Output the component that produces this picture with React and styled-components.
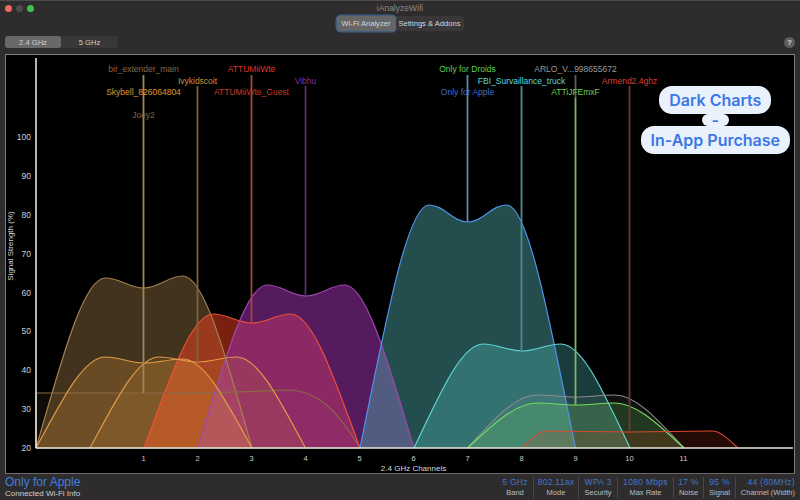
import React from "react";
import styled, { createGlobalStyle } from "styled-components";

const GlobalStyle = createGlobalStyle`
  html, body {
    margin: 0;
    padding: 0;
    background: #2f2c2e;
  }
  body {
    font-family: "Liberation Sans", Arial, sans-serif;
  }
`;

const Window = styled.div`
  display: flex;
  flex-direction: column;
  width: 800px;
  height: 500px;
  overflow: hidden;
  background: #2f2c2e;
  color: #d8d8d8;
  box-sizing: border-box;
  border-top: 1px solid #4c4a4b;
`;
const TitleBar = styled.div`
  position: relative;
  display: flex;
  align-items: center;
  justify-content: center;
  height: 14px;
  font-size: 8.5px;
  color: #8c8a8b;
`;
const Lights = styled.div`
  position: absolute;
  left: 5px;
  top: 4px;
  display: flex;
  gap: 4px;
`;
const Light = styled.span`
  width: 7px;
  height: 7px;
  border-radius: 50%;
  background: ${(p) => p.$color};
`;
const TabRow = styled.div`
  display: flex;
  justify-content: center;
  margin-top: 1px;
  height: 15px;
`;
const Tab = styled.div`
  display: flex;
  align-items: center;
  justify-content: center;
  box-sizing: border-box;
  width: ${(p) => p.$w}px;
  font-size: 7.6px;
  color: #d6d6d6;
  border-radius: 4px;
  background: ${(p) => (p.$active ? "#666669" : "#3a3739")};
  box-shadow: ${(p) => (p.$active ? "0 0 0 1.5px #3f5f82" : "none")};
`;
const BandRow = styled.div`
  display: flex;
  align-items: center;
  justify-content: space-between;
  padding: 0 5px;
  margin-top: 5px;
  height: 12px;
`;
const Segments = styled.div`
  display: flex;
  width: 113px;
  height: 12px;
  border-radius: 3px;
  background: #3a3739;
`;
const Segment = styled.div`
  display: flex;
  align-items: center;
  justify-content: center;
  width: ${(p) => p.$w}px;
  font-size: 7.6px;
  color: #cfcfcf;
  border-radius: 3px;
  background: ${(p) => (p.$active ? "#69686a" : "transparent")};
`;
const Help = styled.div`
  display: flex;
  align-items: center;
  justify-content: center;
  width: 11px;
  height: 11px;
  border-radius: 50%;
  background: #5e5c5e;
  color: #d8d8d8;
  font-size: 8px;
  font-weight: 700;
`;
const ChartBox = styled.div`
  position: relative;
  box-sizing: border-box;
  margin: 6px 5px 0;
  height: 420px;
  background: #000;
  border: 1px solid #7d7d7d;
  border-bottom-color: #6a6a6a;
`;
const Chart = styled.svg`
  display: block;
  width: 788px;
  height: 418px;
`;
const Promo = styled.div`
  position: absolute;
  right: 4px;
  top: 31px;
  display: flex;
  flex-direction: column;
  align-items: center;
`;
const Pill = styled.div`
  padding: 0 ${(p) => p.$pad}px;
  height: ${(p) => p.$h}px;
  line-height: ${(p) => p.$h}px;
  border-radius: 13px;
  background: #e9f1fd;
  color: #3b78e2;
  font-family: "Inter", "Liberation Sans", sans-serif;
  font-size: 16px;
  font-weight: 600;
  white-space: nowrap;
`;
const Footer = styled.div`
  display: flex;
  justify-content: space-between;
  flex: 1;
  padding: 1px 5px 0;
`;
const Connected = styled.div`
  display: flex;
  flex-direction: column;
`;
const ConnectedName = styled.div`
  font-size: 12px;
  line-height: 14px;
  color: #3f7fdc;
`;
const ConnectedHint = styled.div`
  font-size: 8px;
  line-height: 10px;
  color: #cfcfcf;
`;
const Stats = styled.div`
  display: flex;
  height: 21px;
  margin-top: 2px;
`;
const Stat = styled.div`
  display: flex;
  flex-direction: column;
  align-items: ${(p) => (p.$last ? "flex-end" : "center")};
  justify-content: space-between;
  box-sizing: border-box;
  width: ${(p) => p.$w}px;
  border-left: ${(p) => (p.$first ? "none" : "1px solid #49474a")};
`;
const StatValue = styled.div`
  font-size: 8.5px;
  line-height: 11px;
  letter-spacing: 0.3px;
  color: #3f78d0;
  white-space: nowrap;
`;
const StatLabel = styled.div`
  font-size: 7.5px;
  line-height: 10px;
  color: #bdbdbd;
  white-space: nowrap;
`;

const BASE = 448;
const CH = (n) => 143.5 + (n - 1) * 54;
const valueY = (v) => BASE - (v - 20) * 3.885;

// left edge, right edge, then y of left peak, centre dip, right peak
const hump = (x0, x1, lp, dip, rp, spread = 0.18) => {
  const w = x1 - x0;
  const mx = x0 + w * 0.5;
  const lx = mx - w * spread;
  const rx = mx + w * spread;
  const rise = lx - x0;
  return [
    `M${x0},${BASE}`,
    `C${x0 + rise * 0.36},${BASE - (BASE - lp) * 0.5} ${x0 + rise * 0.68},${lp} ${lx},${lp}`,
    `C${lx + w * 0.07},${lp} ${mx - w * 0.07},${dip} ${mx},${dip}`,
    `C${mx + w * 0.07},${dip} ${rx - w * 0.07},${rp} ${rx},${rp}`,
    `C${x1 - rise * 0.68},${rp} ${x1 - rise * 0.36},${BASE - (BASE - rp) * 0.5} ${x1},${BASE}`,
  ].join(" ");
};

// painted back to front, the outlines go on top of all fills
const curves = [
  { d: hump(36, 252, 278, 288, 276), stroke: "#a5804e", fill: "rgba(165,128,78,0.4)" },
  {
    d: `M36,393 L140,393 C200,394 240,392 287,390 C320,390 340,415 360,${BASE} L36,${BASE} Z`,
    stroke: "#8a6a45",
    fill: "rgba(150,110,60,0.1)",
  },
  { d: hump(144, 360, 314, 323, 314), stroke: "#ee5038", fill: "rgba(244,64,32,0.5)" },
  { d: hump(198, 414, 285, 296, 285), stroke: "#9d48b0", fill: "rgba(154,50,172,0.55)" },
  { d: hump(36, 252, 357, 363, 359), stroke: "#e29a45", fill: "rgba(226,150,60,0.24)" },
  { d: hump(90, 305.5, 357, 362, 357), stroke: "#e29a45", fill: "rgba(226,150,60,0.14)" },
  { d: hump(360, 575.5, 205, 222, 205), stroke: "#4f93e8", fill: "rgba(78,170,170,0.46)" },
  { d: hump(414, 630, 344, 351, 344), stroke: "#5fd6d6", fill: "rgba(90,200,200,0.3)" },
  { d: hump(467.5, 684, 395, 397, 395), stroke: "#8c8c8c", fill: "rgba(140,140,140,0.12)" },
  { d: hump(467.5, 684, 403, 405, 403), stroke: "#74dc62", fill: "rgba(110,220,90,0.2)" },
  { d: hump(521.5, 738, 431, 432, 431, 0.38), stroke: "#d84a2e", fill: "rgba(200,60,30,0.18)" },
];

const drops = [
  { x: CH(1), y1: 75, y2: 393, stroke: "#a5855a" },
  { x: CH(2), y1: 86, y2: 362, stroke: "#80603f" },
  { x: CH(3), y1: 75, y2: 323, stroke: "#a84536" },
  { x: CH(4), y1: 86, y2: 296, stroke: "#5a3068" },
  { x: CH(7), y1: 75, y2: 222, stroke: "#5c8ca3" },
  { x: CH(8), y1: 86, y2: 351, stroke: "#4f8a90" },
  { x: CH(9), y1: 75, y2: 98, stroke: "#5f5f5f" },
  { x: CH(9), y1: 98, y2: 405, stroke: "#7cb468" },
  { x: CH(10), y1: 86, y2: 432, stroke: "#6c3d32" },
];

const names = [
  { t: "bir_extender_main", x: CH(1), y: 72, c: "#8a6b47" },
  { t: "Ivykidscoit", x: CH(2), y: 84, c: "#cf9040" },
  { t: "ATTUMiiWte", x: CH(3), y: 72, c: "#e03222" },
  { t: "Vibhu", x: CH(4), y: 84, c: "#8a2c9c" },
  { t: "Skybell_826064804", x: CH(1), y: 95, c: "#e09530" },
  { t: "ATTUMiiWte_Guest", x: CH(3), y: 95, c: "#c83a25" },
  { t: "Joey2", x: CH(1), y: 118, c: "#806646" },
  { t: "Only for Droids", x: CH(7), y: 72, c: "#5fd050" },
  { t: "ARLO_V...998655672", x: CH(9), y: 72, c: "#9a9a9a" },
  { t: "FBI_Survaillance_truck", x: CH(8), y: 84, c: "#5fd8d8" },
  { t: "Only for Apple", x: CH(7), y: 95, c: "#3f70d0" },
  { t: "ATTiJFEmxF", x: CH(9), y: 95, c: "#6fd050" },
  { t: "Armend2.4ghz", x: CH(10), y: 84, c: "#d84030" },
];

const stats = [
  ["5 GHz", "Band", 36],
  ["802.11ax", "Mode", 45],
  ["WPA 3", "Security", 39],
  ["1080 Mbps", "Max Rate", 56],
  ["17 %", "Noise", 30],
  ["95 %", "Signal", 32],
  ["44 (80MHz)", "Channel (Width)", 60],
];

const channels = [1, 2, 3, 4, 5, 6, 7, 8, 9, 10, 11];
const ticks = [20, 30, 40, 50, 60, 70, 80, 90, 100];

function App() {
  return (
    <Window>
      <GlobalStyle />
      <TitleBar>
        <Lights>
          <Light $color="#ec6a5e" />
          <Light $color="#4e4c4d" />
          <Light $color="#3fc24f" />
        </Lights>
        iAnalyzeWifi
      </TitleBar>
      <TabRow>
        <Tab $w={59} $active>Wi-Fi Analyzer</Tab>
        <Tab $w={68}>Settings &amp; Addons</Tab>
      </TabRow>
      <BandRow>
        <Segments>
          <Segment $w={56} $active>2.4 GHz</Segment>
          <Segment $w={57}>5 GHz</Segment>
        </Segments>
        <Help>?</Help>
      </BandRow>
      <ChartBox>
        <Chart viewBox="6 55 788 418">
          {curves.map((c, i) => (
            <path key={i} d={c.d} fill={c.fill} />
          ))}
          {curves.map((c, i) => (
            <path key={i} d={c.d} fill="none" stroke={c.stroke} strokeWidth="1.2" />
          ))}
          {drops.map((l, i) => (
            <line key={i} x1={l.x} x2={l.x} y1={l.y1} y2={l.y2} stroke={l.stroke} strokeWidth="1.8" />
          ))}
          <line x1="36" x2="36" y1="58" y2={BASE} stroke="#f2efe9" strokeWidth="1.5" />
          <line x1="36" x2="793" y1={BASE} y2={BASE} stroke="#e8e4da" strokeWidth="1.5" />
          {names.map((n) => (
            <text key={n.t} x={n.x} y={n.y} fill={n.c} fontSize="8.5" textAnchor="middle">
              {n.t}
            </text>
          ))}
          {ticks.map((v) => (
            <text key={v} x="31" y={valueY(v) + 3} fill="#d0d0d0" fontSize="8.5" textAnchor="end">
              {v}
            </text>
          ))}
          {channels.map((n) => (
            <text key={n} x={CH(n)} y="461" fill="#d0d0d0" fontSize="7.5" textAnchor="middle">
              {n}
            </text>
          ))}
          <text x="413.5" y="471" fill="#d8d8d8" fontSize="8" textAnchor="middle">
            2.4 GHz Channels
          </text>
          <text
            transform="translate(13 246) rotate(-90)"
            fill="#d8d8d8"
            fontSize="8"
            textAnchor="middle"
          >
            Signal Strength (%)
          </text>
        </Chart>
        <Promo>
          <Pill $pad={10} $h={28}>Dark Charts</Pill>
          <Pill $pad={10} $h={12}>-</Pill>
          <Pill $pad={10} $h={28}>In-App Purchase</Pill>
        </Promo>
      </ChartBox>
      <Footer>
        <Connected>
          <ConnectedName>Only for Apple</ConnectedName>
          <ConnectedHint>Connected Wi-Fi Info</ConnectedHint>
        </Connected>
        <Stats>
          {stats.map(([value, label, w], i) => (
            <Stat key={label} $w={w} $first={i === 0} $last={i === stats.length - 1}>
              <StatValue>{value}</StatValue>
              <StatLabel>{label}</StatLabel>
            </Stat>
          ))}
        </Stats>
      </Footer>
    </Window>
  );
}

export default App;
